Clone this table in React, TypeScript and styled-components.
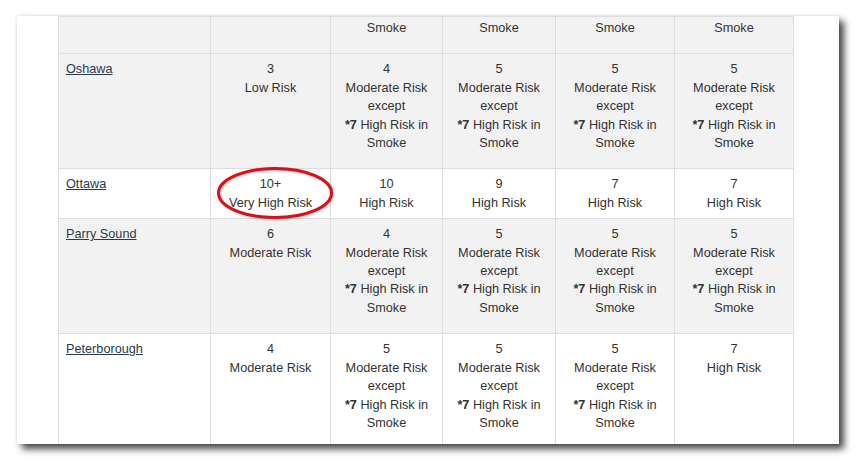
import React from "react";
import styled, { createGlobalStyle } from "styled-components";

const GlobalStyle = createGlobalStyle`
  html, body {
    margin: 0;
    padding: 0;
    background: #ffffff;
  }
  body {
    font-family: "Liberation Sans", Arial, sans-serif;
  }
`;

const Page = styled.div`
  width: 857px;
  height: 463px;
  box-sizing: border-box;
  padding: 16px 0 0 17px;
  background: #ffffff;
  overflow: hidden;
`;

const Card = styled.div`
  width: 822px;
  height: 428px;
  box-sizing: border-box;
  padding-left: 41px;
  background: #ffffff;
  overflow: hidden;
  box-shadow: 5px 5px 7px rgba(0, 0, 0, 0.72), 0 0 3px rgba(0, 0, 0, 0.12);
`;

const Table = styled.table`
  border-collapse: collapse;
  table-layout: fixed;
  width: 736px;
  font-size: 12.7px;
  line-height: 18.4px;
  color: #333333;
`;

const Row = styled.tr<{ $shaded?: boolean }>`
  background: ${(p) => (p.$shaded ? "#f2f2f2" : "#ffffff")};
`;

const Cell = styled.td<{ $city?: boolean; $clipped?: boolean }>`
  position: relative;
  vertical-align: top;
  border: 1px solid #dddddd;
  padding: ${(p) => (p.$clipped ? "2px 7px 6px" : "6px 7px")};
  text-align: ${(p) => (p.$city ? "left" : "center")};
`;

const CityLink = styled.a`
  color: #2c3a4e;
  text-decoration: underline;
`;

const Risk = styled.div<{ $note?: boolean }>`
  margin-bottom: ${(p) => (p.$note ? "10px" : "0")};
`;

const Strong = styled.strong`
  font-weight: bold;
`;

const Circle = styled.svg`
  position: absolute;
  left: 6px;
  top: -2px;
  width: 116px;
  height: 52px;
  overflow: visible;
  pointer-events: none;
  filter: drop-shadow(1px 1.5px 1px rgba(0, 0, 0, 0.3));
`;

type CellData =
  | { kind: "plain"; score: string; label: string }
  | { kind: "except"; score: string }
  | { kind: "smoke" }
  | { kind: "empty" };

type RowData = {
  city?: string;
  shaded: boolean;
  clipped?: boolean;
  circled?: boolean;
  cells: CellData[];
};

const ex = (score: string): CellData => ({ kind: "except", score });
const pl = (score: string, label: string): CellData => ({ kind: "plain", score, label });

const rows: RowData[] = [
  {
    shaded: true,
    clipped: true,
    cells: [{ kind: "empty" }, { kind: "smoke" }, { kind: "smoke" }, { kind: "smoke" }, { kind: "smoke" }],
  },
  {
    city: "Oshawa",
    shaded: true,
    cells: [pl("3", "Low Risk"), ex("4"), ex("5"), ex("5"), ex("5")],
  },
  {
    city: "Ottawa",
    shaded: false,
    circled: true,
    cells: [pl("10+", "Very High Risk"), pl("10", "High Risk"), pl("9", "High Risk"), pl("7", "High Risk"), pl("7", "High Risk")],
  },
  {
    city: "Parry Sound",
    shaded: true,
    cells: [pl("6", "Moderate Risk"), ex("4"), ex("5"), ex("5"), ex("5")],
  },
  {
    city: "Peterborough",
    shaded: false,
    cells: [pl("4", "Moderate Risk"), ex("5"), ex("5"), ex("5"), pl("7", "High Risk")],
  },
];

const colWidths = [152, 120, 112, 113, 119, 119];

function CellContent({ data }: { data: CellData }) {
  switch (data.kind) {
    case "plain":
      return (
        <Risk>
          {data.score}
          <br />
          {data.label}
        </Risk>
      );
    case "except":
      return (
        <Risk $note>
          {data.score}
          <br />
          Moderate Risk
          <br />
          except
          <br />
          <Strong>*7</Strong> High Risk in
          <br />
          Smoke
        </Risk>
      );
    case "smoke":
      return <Risk $note>Smoke</Risk>;
    default:
      return null;
  }
}

export default function App() {
  return (
    <>
      <GlobalStyle />
      <Page>
        <Card>
          <Table>
            <colgroup>
              {colWidths.map((w, i) => (
                <col key={i} style={{ width: w }} />
              ))}
            </colgroup>
            <tbody>
              {rows.map((row, ri) => (
                <Row key={ri} $shaded={row.shaded}>
                  <Cell $city $clipped={row.clipped}>
                    {row.city && <CityLink href="#">{row.city}</CityLink>}
                  </Cell>
                  {row.cells.map((c, ci) => (
                    <Cell key={ci} $clipped={row.clipped}>
                      <CellContent data={c} />
                      {row.circled && ci === 0 && (
                        <Circle viewBox="0 0 116 52">
                          <ellipse cx="58" cy="26" rx="56.5" ry="24.5" fill="none" stroke="#d3121b" strokeWidth="3" />
                        </Circle>
                      )}
                    </Cell>
                  ))}
                </Row>
              ))}
            </tbody>
          </Table>
        </Card>
      </Page>
    </>
  );
}
